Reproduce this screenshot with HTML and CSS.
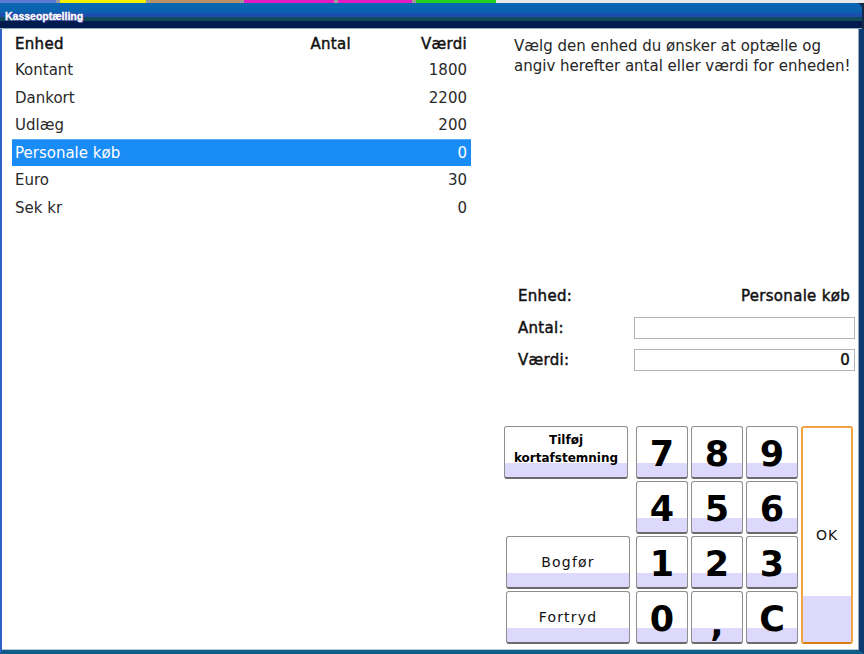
FILE: index.html
```html
<!DOCTYPE html>
<html lang="da">
<head>
<meta charset="utf-8">
<title>Kasseoptælling</title>
<link rel="stylesheet" href="styles.css">
</head>
<body>
<div class="screen">
  <div class="tabs">
    <span class="tab blue"></span><span class="sep"></span>
    <span class="tab yellow"></span><span class="sep"></span>
    <span class="tab tan"></span><span class="sep"></span>
    <span class="tab magenta"></span><span class="sep"></span>
    <span class="tab magenta2"></span><span class="sep"></span>
    <span class="tab green"></span>
    <span class="tab rest"></span>
  </div>
  <div class="window">
    <div class="titlebar"><span class="title">Kasseoptælling</span></div>
    <div class="content">
      <div class="listpane">
        <div class="list">
          <div class="row head"><span>Enhed</span><span class="num">Antal</span><span class="num">Værdi</span></div>
          <div class="row"><span>Kontant</span><span class="num"></span><span class="num">1800</span></div>
          <div class="row"><span>Dankort</span><span class="num"></span><span class="num">2200</span></div>
          <div class="row"><span>Udlæg</span><span class="num"></span><span class="num">200</span></div>
          <div class="row selected"><span>Personale køb</span><span class="num"></span><span class="num">0</span></div>
          <div class="row"><span>Euro</span><span class="num"></span><span class="num">30</span></div>
          <div class="row"><span>Sek kr</span><span class="num"></span><span class="num">0</span></div>
        </div>
      </div>
      <div class="sidepane">
        <p class="hint">Vælg den enhed du ønsker at optælle og<br>angiv herefter antal eller værdi for enheden!</p>
        <div class="form">
          <span class="label">Enhed:</span><span class="value">Personale køb</span>
          <span class="label">Antal:</span><span class="field"></span>
          <span class="label">Værdi:</span><span class="field">0</span>
        </div>
        <div class="keypad">
          <button class="btn wide small add">Tilføj<br>kortafstemning</button>
          <button class="btn digit d7">7</button>
          <button class="btn digit">8</button>
          <button class="btn digit">9</button>
          <button class="btn ok">OK</button>
          <span class="blank"></span>
          <button class="btn digit">4</button>
          <button class="btn digit">5</button>
          <button class="btn digit">6</button>
          <button class="btn wide text shift">Bogfør</button>
          <button class="btn digit">1</button>
          <button class="btn digit">2</button>
          <button class="btn digit">3</button>
          <button class="btn wide text shift">Fortryd</button>
          <button class="btn digit">0</button>
          <button class="btn digit comma">,</button>
          <button class="btn digit">C</button>
        </div>
      </div>
    </div>
  </div>
</div>
</body>
</html>
```
FILE: styles.css
```css
* { box-sizing: border-box; }
html, body { margin: 0; padding: 0; }
body {
  width: 864px;
  height: 654px;
  overflow: hidden;
  background: #14284a;
  font-family: "DejaVu Sans", Verdana, sans-serif;
  color: #1a1a1a;
}
.screen {
  width: 864px;
  height: 654px;
  display: flex;
  flex-direction: column;
}
.tabs {
  height: 3px;
  display: flex;
  background: #e6e6e6;
}
.tab { height: 3px; display: block; }
.sep { width: 4px; background: #9a9a9a; }
.blue { width: 56px; background: #5d7bd6; }
.yellow { width: 86px; background: #f6f000; }
.tan { width: 90px; background: #b89266; }
.magenta { width: 90px; background: #e21cc4; }
.magenta2 { width: 74px; background: #e21cc4; }
.green { width: 80px; background: #22d022; }
.rest { flex: 1; background: #e8e8e8; }

.window {
  flex: 1;
  display: flex;
  flex-direction: column;
}
.titlebar {
  height: 26px;
  border-top-right-radius: 6px;
  margin-right: 2px;
  background: linear-gradient(to bottom,
    #0b68b4 0px, #0a60ad 10px,
    #1c4cb0 10px, #1c4cb0 14px,
    #0f4b5b 14px, #0f4b5b 18px,
    #021b4e 18px, #021b4e 25px,
    #8faeb8 25px, #8faeb8 26px);
  padding: 8px 0 0 5px;
}
.title {
  font-family: "Liberation Sans", Arial, sans-serif;
  font-weight: bold;
  font-size: 10.5px;
  line-height: 11px;
  color: #ffffff;
  -webkit-text-stroke: 0.3px #ffffff;
  text-shadow: 1px 1px 0 #4a46b8;
  display: block;
}
.content {
  flex: 1;
  background: #ffffff;
  border-left: 2px solid #2c62c6;
  border-right: 5px solid #0c3b72;
  border-bottom: 4px solid #0f5d8a;
  box-shadow: inset -1px 0 0 #9aa6b0, inset 0 -1px 0 #b8c8d0;
  display: grid;
  grid-template-columns: 488px 1fr;
}

/* list */
.listpane { padding: 3.5px 0 0 10px; }
.list { width: 459px; }
.row {
  display: grid;
  grid-template-columns: 1fr 80px 116px;
  height: 27.5px;
  align-items: center;
  padding: 0 4px 0 3px;
  font-size: 15px;
  color: #2a2a2a;
}
.row.head {
  height: 23.75px;
  font-size: 15px;
  letter-spacing: 0.3px;
  -webkit-text-stroke: 0.45px #111;
  color: #111;
}
.row .num { text-align: right; }
.row.selected {
  background: #1a8cf6;
  color: #ffffff;
  box-shadow: inset 0 1px 0 #5aa8f0;
}

/* side pane */
.sidepane {
  padding: 7px 0 0 14px;
  display: flex;
  flex-direction: column;
}
.hint {
  margin: 0;
  padding-left: 10px;
  font-size: 15px;
  line-height: 20px;
  color: #262626;
}
.form {
  margin: 209px 0 0 14px;
  display: grid;
  grid-template-columns: 116px 221px;
  grid-template-rows: repeat(3, 22px);
  row-gap: 10px;
  align-items: center;
  font-size: 15px;
  letter-spacing: 0.3px;
  -webkit-text-stroke: 0.45px #111;
  color: #111;
}
.form .value { text-align: right; padding-right: 5px; }
.form .field {
  height: 22px;
  border: 1px solid #b4b4b4;
  -webkit-text-stroke: 0.45px #111;
  background: #fff;
  text-align: right;
  padding-right: 4px;
  line-height: 20px;
}

.keypad {
  margin-top: 55px;
  display: grid;
  grid-template-columns: 129px repeat(4, 52px);
  grid-template-rows: repeat(4, 53px);
  gap: 2px 3px;
}
.btn {
  margin: 0;
  padding: 0;
  border: 1px solid #8e8e8e;
  border-bottom: 2px solid #6a6a6a;
  border-radius: 3px;
  background: linear-gradient(to bottom, #ffffff 0, #ffffff calc(100% - 14px), #dcd9fc calc(100% - 14px), #dcd9fc 100%);
  color: #000;
  font-family: "DejaVu Sans", Verdana, sans-serif;
  display: flex;
  align-items: center;
  justify-content: center;
  text-align: center;
}
.btn.wide { width: 124px; }
.btn.shift { margin-left: 2px; }
.btn.text { font-size: 14px; letter-spacing: 1.2px; color: #111; }
.btn.small {
  font-size: 12px;
  font-weight: bold;
  line-height: 18px;
  padding-bottom: 7px;
}
.btn.digit {
  font-size: 35px;
  font-weight: bold;
  padding-top: 5px;
  line-height: 1;
}
.btn.comma { padding-top: 14px; }
.btn.ok {
  grid-column: 5;
  grid-row: 1 / span 4;
  border: 2px solid #f2a444;
  border-bottom-color: #dc7c12;
  border-radius: 3px;
  background: linear-gradient(to bottom, #ffffff 0, #ffffff calc(100% - 46px), #dcd9fc calc(100% - 46px), #dcd9fc 100%);
  font-size: 14px;
  letter-spacing: 1px;
  color: #111;
}
.blank { display: block; }
```
